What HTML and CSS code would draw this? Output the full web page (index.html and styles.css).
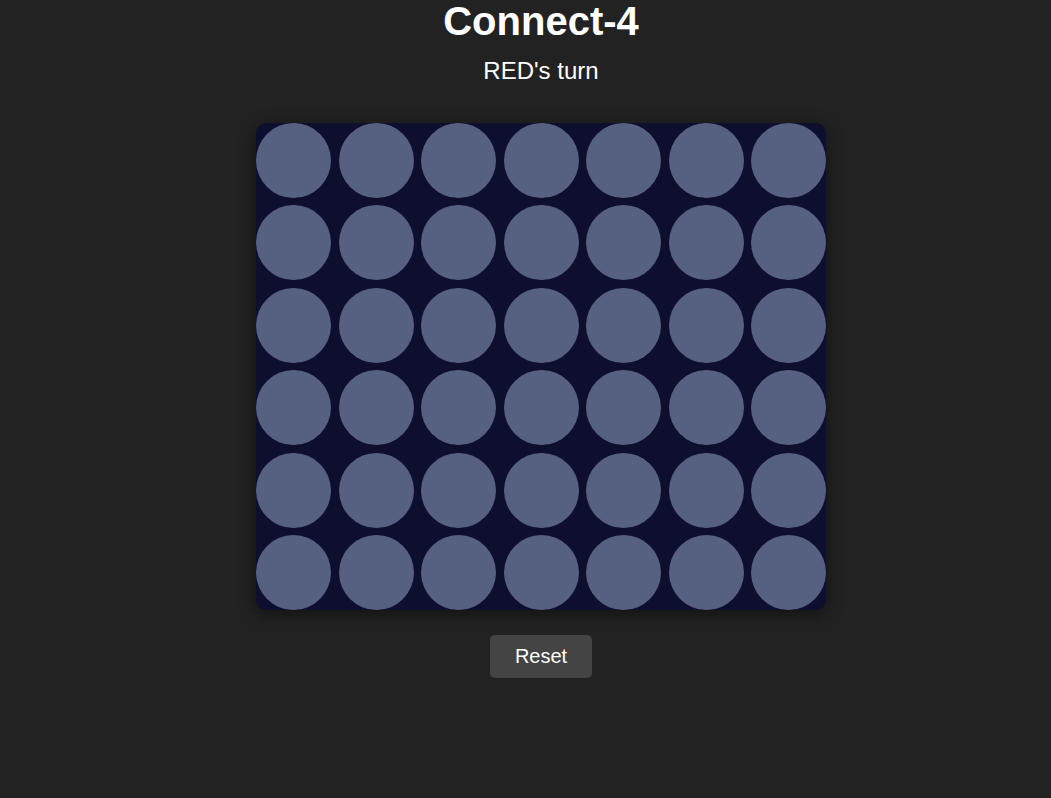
FILE: index.html
```html
<!DOCTYPE html>
<html lang="en">
<head>
<meta charset="utf-8">
<title>Connect-4</title>
<link rel="stylesheet" href="styles.css">
</head>
<body>
<main class="game">
  <h1 class="title">Connect-4</h1>
  <p class="status">RED's turn</p>
  <div class="board">
    <div class="cell"></div><div class="cell"></div><div class="cell"></div><div class="cell"></div><div class="cell"></div><div class="cell"></div><div class="cell"></div>
    <div class="cell"></div><div class="cell"></div><div class="cell"></div><div class="cell"></div><div class="cell"></div><div class="cell"></div><div class="cell"></div>
    <div class="cell"></div><div class="cell"></div><div class="cell"></div><div class="cell"></div><div class="cell"></div><div class="cell"></div><div class="cell"></div>
    <div class="cell"></div><div class="cell"></div><div class="cell"></div><div class="cell"></div><div class="cell"></div><div class="cell"></div><div class="cell"></div>
    <div class="cell"></div><div class="cell"></div><div class="cell"></div><div class="cell"></div><div class="cell"></div><div class="cell"></div><div class="cell"></div>
    <div class="cell"></div><div class="cell"></div><div class="cell"></div><div class="cell"></div><div class="cell"></div><div class="cell"></div><div class="cell"></div>
  </div>
  <button class="reset" type="button">Reset</button>
</main>
</body>
</html>
```

FILE: styles.css
```css
html, body {
  margin: 0;
  padding: 0;
  background: #222222;
  height: 100%;
}

body {
  font-family: "Liberation Sans", Arial, sans-serif;
  color: #ffffff;
  padding-left: 31px;
  box-sizing: border-box;
}

.game {
  display: flex;
  flex-direction: column;
  align-items: center;
}

.title {
  margin: 0;
  padding-top: 1px;
  font-size: 40px;
  line-height: 40px;
  font-weight: bold;
}

.status {
  margin: 16px 0 0;
  font-size: 24px;
  line-height: 28px;
}

.board {
  margin-top: 38px;
  display: grid;
  grid-template-columns: repeat(7, 75px);
  grid-auto-rows: 75px;
  column-gap: 7.5px;
  row-gap: 7.4px;
  background: #0e0e2e;
  border-radius: 10px;
  box-shadow: 0 4px 16px rgba(0, 0, 0, 0.5);
}

.cell {
  width: 75px;
  height: 75px;
  border-radius: 50%;
  background: #566080;
}

.reset {
  margin-top: 25px;
  padding: 10px 25px;
  font-family: "Liberation Sans", Arial, sans-serif;
  font-size: 20px;
  line-height: 23px;
  color: #ffffff;
  background: #444444;
  border: none;
  border-radius: 5px;
  cursor: pointer;
}
```
